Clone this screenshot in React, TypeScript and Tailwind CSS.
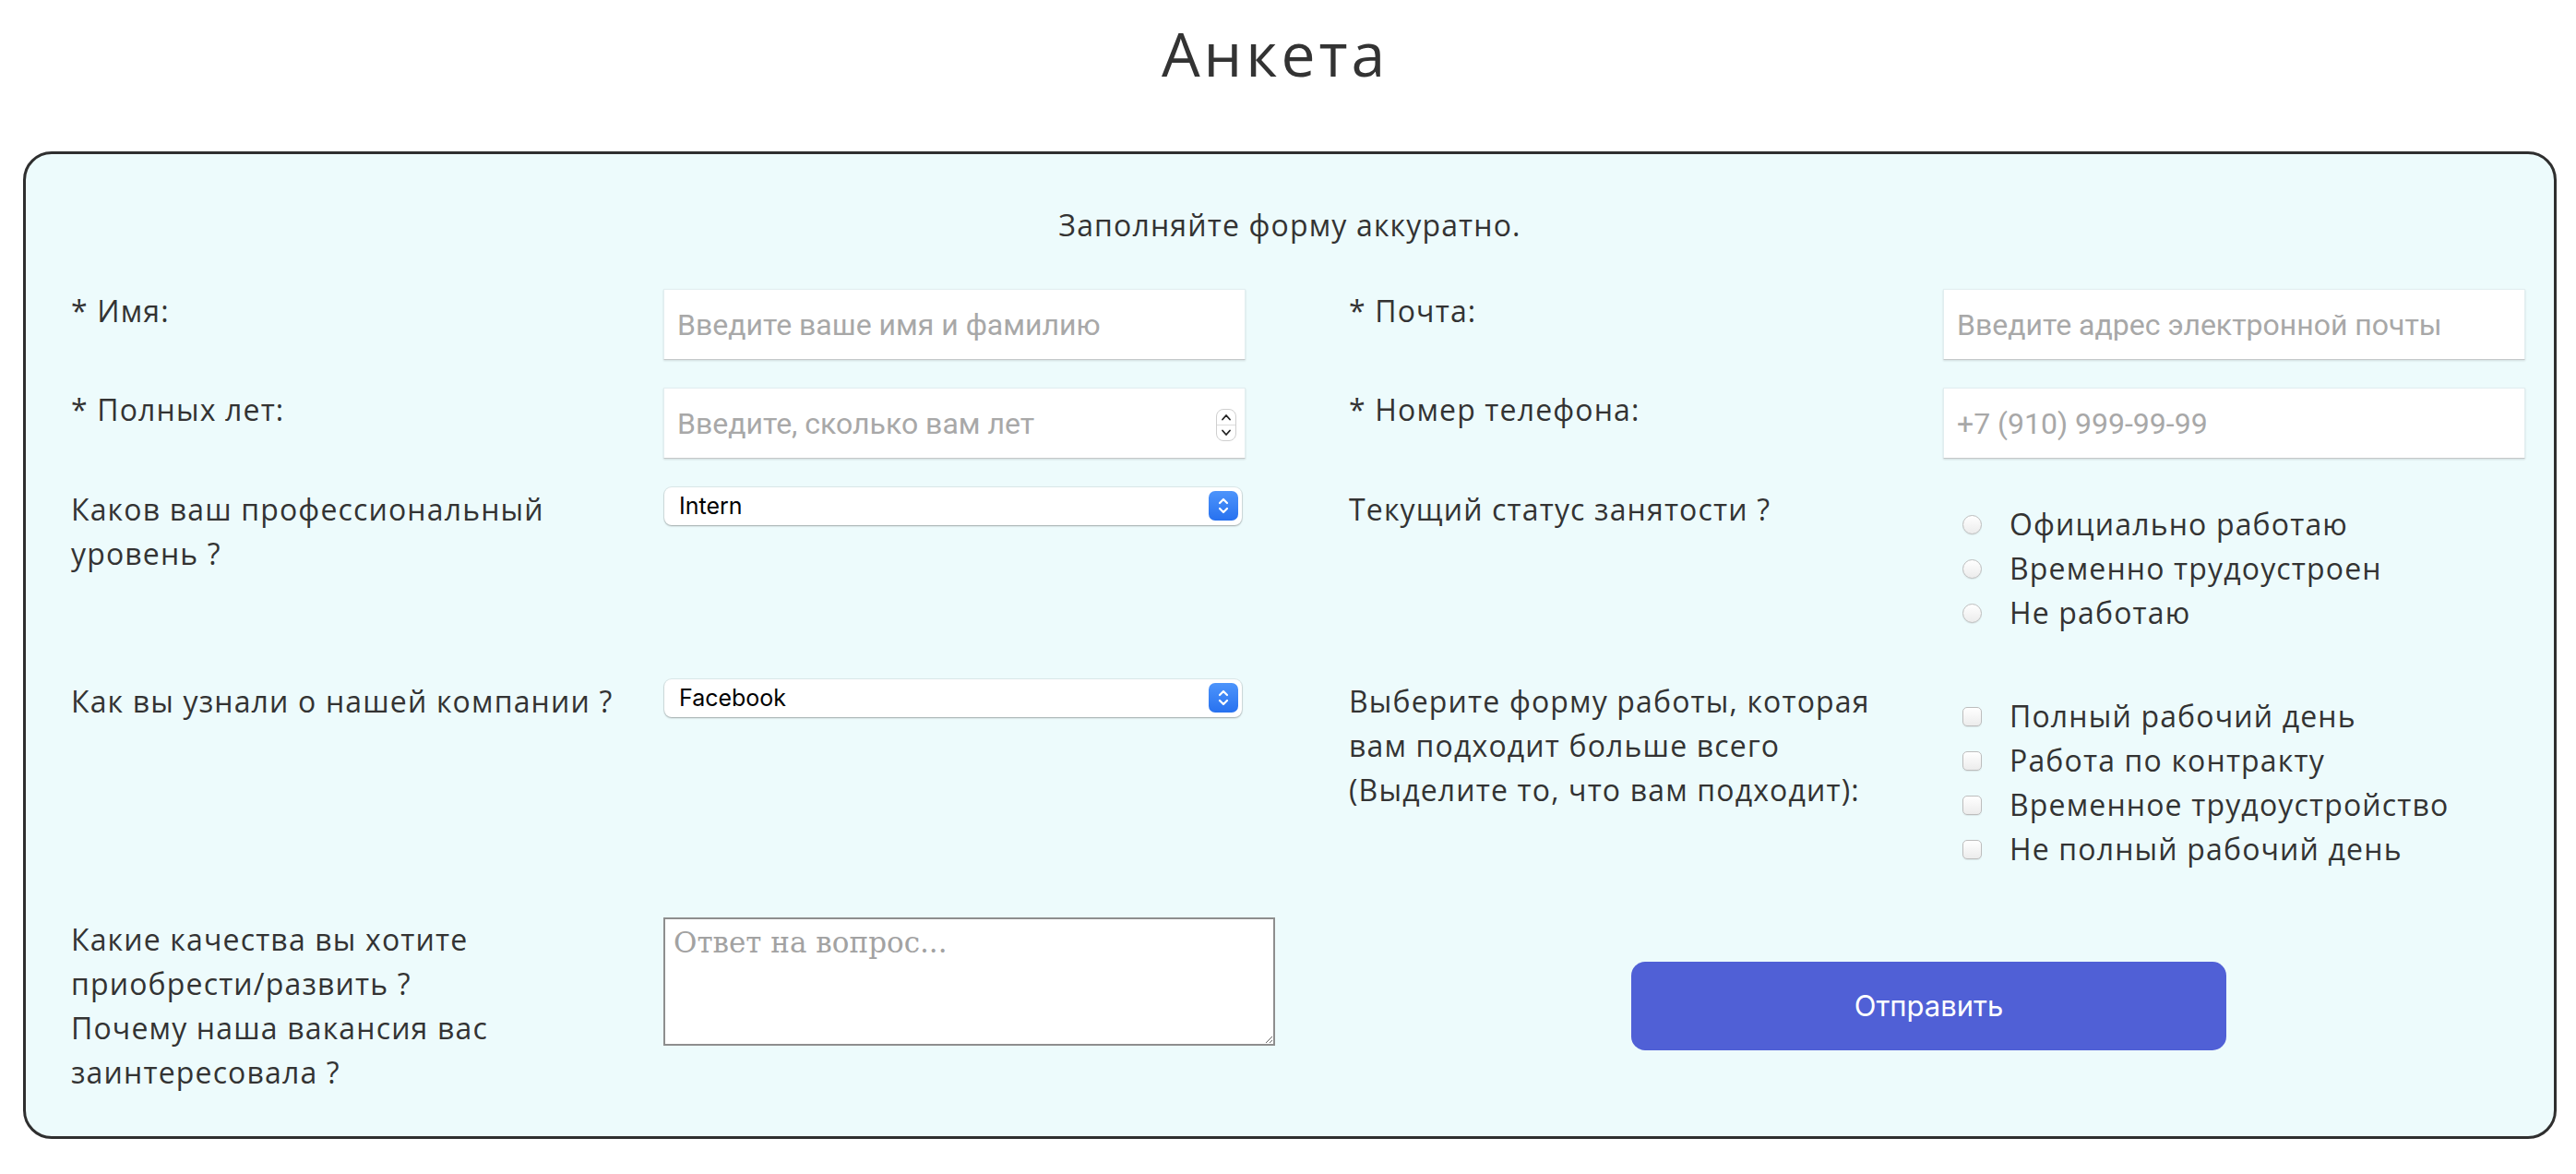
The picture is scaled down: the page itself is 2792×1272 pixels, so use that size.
import React from 'react';

const labelText = 'text-[32px] leading-[48px] tracking-[0.036em] text-[#333] whitespace-nowrap';

const Label = ({ children, w }: { children: React.ReactNode; w: string }) => (
  <div className={`${w} shrink-0 ${labelText}`}>{children}</div>
);

const TextInput = ({ placeholder, spinner }: { placeholder: string; spinner?: boolean }) => (
  <div className="relative w-[631px] h-[77px] shrink-0">
    <input
      type="text"
      placeholder={placeholder}
      className="w-full h-full bg-white border border-[#e2eef0] border-b-[#c4c8c9] shadow-[0_1px_2px_rgba(0,0,0,0.12)] px-[14px] font-['Roboto',sans-serif] text-[32px] text-[#333] placeholder:text-[#a8a8a8] outline-none"
    />
    {spinner && (
      <div className="absolute right-[10px] top-[23px] w-[22px] h-[35px] rounded-[8px] border border-[#cfcfcf] bg-white flex flex-col overflow-hidden">
        <div className="flex-1 flex items-center justify-center border-b border-[#dcdcdc]">
          <svg width="12" height="8" viewBox="0 0 12 8" fill="none">
            <path d="M2 6.5 L6 2 L10 6.5" stroke="#222" strokeWidth="1.8" strokeLinecap="round" strokeLinejoin="round" />
          </svg>
        </div>
        <div className="flex-1 flex items-center justify-center">
          <svg width="12" height="8" viewBox="0 0 12 8" fill="none">
            <path d="M2 1.5 L6 6 L10 1.5" stroke="#222" strokeWidth="1.8" strokeLinecap="round" strokeLinejoin="round" />
          </svg>
        </div>
      </div>
    )}
  </div>
);

const SelectBox = ({ value, options }: { value: string; options: string[] }) => (
  <div className="relative ml-[1px] w-[626px] h-[41px] shrink-0 rounded-[8px] bg-white shadow-[0_0_0_1px_rgba(0,0,0,0.07),0_1px_2px_rgba(0,0,0,0.28)]">
    <select
      defaultValue={value}
      className="appearance-none w-full h-full bg-transparent pl-[16px] font-['Inter',sans-serif] text-[25px] text-black outline-none"
    >
      {options.map((o) => (
        <option key={o}>{o}</option>
      ))}
    </select>
    <div className="pointer-events-none absolute right-[4px] top-[4px] w-[32px] h-[32px] rounded-[7px] bg-gradient-to-b from-[#4d94fb] to-[#2771ef] flex items-center justify-center">
      <svg width="16" height="22" viewBox="0 0 16 22" fill="none">
        <path d="M4 8 L8 4 L12 8" stroke="#fff" strokeWidth="2.2" strokeLinecap="round" strokeLinejoin="round" />
        <path d="M4 14 L8 18 L12 14" stroke="#fff" strokeWidth="2.2" strokeLinecap="round" strokeLinejoin="round" />
      </svg>
    </div>
  </div>
);

const ChoiceList = ({ items, round }: { items: string[]; round?: boolean }) => (
  <div className="mt-[16px] flex flex-col">
    {items.map((item) => (
      <label key={item} className="flex items-center h-[48px] pl-[21px]">
        <input
          type={round ? 'radio' : 'checkbox'}
          name={round ? 'status' : undefined}
          className={`appearance-none w-[21px] h-[21px] shrink-0 border border-[#bdbdbd] bg-gradient-to-b from-white to-[#ececec] shadow-[0_1px_1px_rgba(0,0,0,0.08)] ${
            round ? 'rounded-full' : 'rounded-[5px]'
          }`}
        />
        <span className={`ml-[30px] ${labelText}`}>{item}</span>
      </label>
    ))}
  </div>
);

const App = () => {
  return (
    <div className="min-h-screen bg-white font-['Open_Sans',sans-serif] text-[#333]">
      <h1 className="pt-[18px] pr-[28px] text-center text-[66px] leading-[78px] tracking-[0.06em] text-[#333]">
        Анкета
      </h1>

      <form className="ml-[25px] mr-[21px] mt-[68px] rounded-[31px] border-[3px] border-[#2f2f2f] bg-[#edfbfc] pb-[45px]">
        <p className="pt-[53px] text-center text-[32px] leading-[48px] tracking-[0.036em] text-[#333]">
          Заполняйте форму аккуратно.
        </p>

        <div className="pl-[49px] flex flex-col">
          {/* row 1 */}
          <div className="mt-[45px] flex">
            <Label w="w-[642px]">* Имя:</Label>
            <div className="w-[743px] shrink-0">
              <TextInput placeholder="Введите ваше имя и фамилию" />
            </div>
            <Label w="w-[644px]">* Почта:</Label>
            <TextInput placeholder="Введите адрес электронной почты" />
          </div>

          {/* row 2 */}
          <div className="mt-[30px] flex">
            <Label w="w-[642px]">* Полных лет:</Label>
            <div className="w-[743px] shrink-0">
              <TextInput placeholder="Введите, сколько вам лет" spinner />
            </div>
            <Label w="w-[644px]">* Номер телефона:</Label>
            <TextInput placeholder="+7 (910) 999-99-99" />
          </div>

          {/* row 3 */}
          <div className="mt-[31px] flex">
            <Label w="w-[642px]">
              Каков ваш профессиональный
              <br />
              уровень ?
            </Label>
            <div className="w-[743px] shrink-0">
              <SelectBox value="Intern" options={['Intern', 'Junior', 'Middle', 'Senior', 'Lead']} />
            </div>
            <Label w="w-[644px]">Текущий статус занятости ?</Label>
            <ChoiceList round items={['Официально работаю', 'Временно трудоустроен', 'Не работаю']} />
          </div>

          {/* row 4 */}
          <div className="mt-[48px] flex">
            <Label w="w-[642px]">Как вы узнали о нашей компании ?</Label>
            <div className="w-[743px] shrink-0">
              <SelectBox value="Facebook" options={['Facebook', 'Instagram', 'HeadHunter', 'Друзья']} />
            </div>
            <Label w="w-[644px]">
              Выберите форму работы, которая
              <br />
              вам подходит больше всего
              <br />
              (Выделите то, что вам подходит):
            </Label>
            <ChoiceList
              items={['Полный рабочий день', 'Работа по контракту', 'Временное трудоустройство', 'Не полный рабочий день']}
            />
          </div>

          {/* row 5 */}
          <div className="mt-[50px] flex">
            <Label w="w-[642px]">
              Какие качества вы хотите
              <br />
              приобрести/развить ?
              <br />
              Почему наша вакансия вас
              <br />
              заинтересовала ?
            </Label>
            <div className="w-[743px] shrink-0">
              <textarea
                placeholder="Ответ на вопрос..."
                className="block w-[663px] h-[139px] bg-white border-2 border-[#8e8e8e] px-[9px] py-[4px] font-['DejaVu_Serif',serif] text-[31px] leading-[42px] text-[#333] placeholder:text-[#a2a2a2] outline-none"
              />
            </div>
            <div className="pl-[306px]">
              <button
                type="button"
                className="mt-[48px] w-[645px] h-[96px] rounded-[15px] bg-[#5060d6] font-['Inter',sans-serif] text-[31px] text-white"
              >
                Отправить
              </button>
            </div>
          </div>
        </div>
      </form>
    </div>
  );
};

export default App;
